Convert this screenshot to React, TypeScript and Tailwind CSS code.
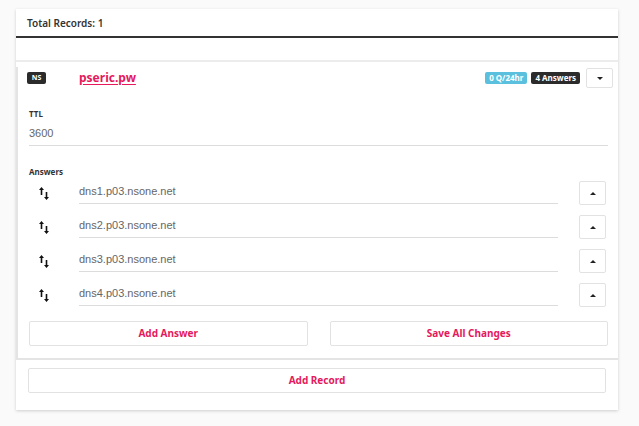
import React from "react";

const answers = [
  "dns1.p03.nsone.net",
  "dns2.p03.nsone.net",
  "dns3.p03.nsone.net",
  "dns4.p03.nsone.net",
];

function SortIcon() {
  return (
    <svg width="10" height="13" viewBox="0 0 10 13" className="block">
      <path d="M2.5 0 L5 3 L3.3 3 L3.3 8 L1.7 8 L1.7 3 L0 3 Z" fill="#111" />
      <path d="M7.5 13 L5 10 L6.7 10 L6.7 5 L8.3 5 L8.3 10 L10 10 Z" fill="#111" />
    </svg>
  );
}

function Caret({ up }: { up?: boolean }) {
  return (
    <svg width="6" height="3" viewBox="0 0 6 3" className="block">
      {up ? (
        <path d="M3 0 L6 3 L0 3 Z" fill="#222" />
      ) : (
        <path d="M0 0 L6 0 L3 3 Z" fill="#222" />
      )}
    </svg>
  );
}

export default function App() {
  const label = { fontFamily: '"Noto Sans", "DejaVu Sans", sans-serif' };
  const thin = { fontFamily: '"Liberation Sans", Arial, sans-serif' };
  return (
    <div className="min-h-screen bg-[#fafafa] pt-[9px] pl-[16px]" style={label}>
      <div className="w-[602px] bg-white shadow-[0_1px_3px_rgba(0,0,0,0.18)] pb-[17px]">
        <div className="h-[29px] px-[11px] pt-[2px] flex items-center border-b-2 border-[#333] text-[10px] font-semibold text-[#333]">
          Total Records: 1
        </div>
        <div className="h-[24px] border-b-2 border-[#ececec]" />

        <div className="border-l-2 border-b-2 border-[#e4e4e4] pl-[11px] pr-[10px] pb-[12px]">
          <div className="h-[22px] mt-[5px] flex items-center">
            <span className="ml-[-2px] w-[19px] h-[12px] rounded-[2px] bg-[#2b2b2b] text-white text-[7px] font-bold flex items-center justify-center">
              NS
            </span>
            <span className="ml-[33px] text-[12px] font-bold text-[#e5195c] underline decoration-1 underline-offset-2">
              pseric.pw
            </span>
            <span className="ml-auto h-[12px] px-[4px] rounded-[2px] bg-[#5bc0de] text-white text-[8px] font-bold flex items-center">
              0 Q/24hr
            </span>
            <span className="ml-[4px] h-[12px] px-[4px] rounded-[2px] bg-[#2b2b2b] text-white text-[8px] font-bold flex items-center">
              4 Answers
            </span>
            <div className="ml-[6px] mr-[-5px] w-[27px] h-[20px] border border-[#e2e2e2] rounded-[2px] bg-white flex items-center justify-center">
              <Caret />
            </div>
          </div>

          <div className="mt-[20px] text-[8px] font-bold text-[#333] leading-[10px]">TTL</div>
          <div className="mt-[7px] h-[20px] border-b border-[#dcdcdc] text-[11px] leading-[14px] text-[#666]" style={thin}>
            3600
          </div>

          <div className="mt-[21px] text-[8px] font-bold text-[#333] leading-[10px]">Answers</div>
          <div className="mt-[3px] flex flex-col gap-[10px]">
            {answers.map((a) => (
              <div key={a} className="h-[24px] flex items-center">
                <div className="w-[50px] flex pl-[10px] pt-[3px]">
                  <SortIcon />
                </div>
                <div className="w-[479px] h-[24px] border-b border-[#dcdcdc] text-[11px] text-[#666] flex items-center" style={thin}>
                  {a}
                </div>
                <div className="ml-[21px] w-[27px] h-[24px] mt-[2px] border border-[#e2e2e2] rounded-[2px] flex items-center justify-center">
                  <Caret up />
                </div>
              </div>
            ))}
          </div>

          <div className="mt-[15px] flex gap-[22px]">
            <button className="flex-1 h-[25px] border border-[#e2e2e2] rounded-[2px] bg-white text-[10px] font-bold text-[#e5195c]">
              Add Answer
            </button>
            <button className="flex-1 h-[25px] border border-[#e2e2e2] rounded-[2px] bg-white text-[10px] font-bold text-[#e5195c]">
              Save All Changes
            </button>
          </div>
        </div>

        <div className="px-[12px] mt-[6px]">
          <button className="w-full h-[25px] border border-[#e2e2e2] rounded-[2px] bg-white text-[10px] font-bold text-[#e5195c]">
            Add Record
          </button>
        </div>
      </div>
    </div>
  );
}
